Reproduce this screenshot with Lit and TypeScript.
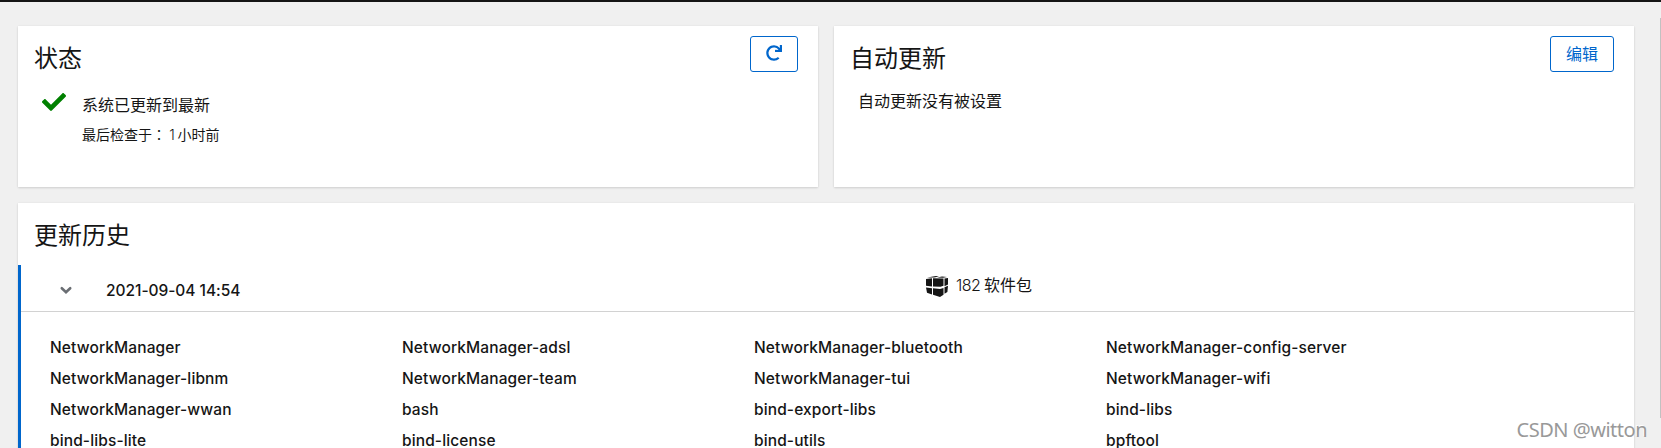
import { LitElement, html, css } from "lit";
import { customElement } from "lit/decorators.js";

const PACKAGES = [
  "NetworkManager", "NetworkManager-adsl", "NetworkManager-bluetooth", "NetworkManager-config-server",
  "NetworkManager-libnm", "NetworkManager-team", "NetworkManager-tui", "NetworkManager-wifi",
  "NetworkManager-wwan", "bash", "bind-export-libs", "bind-libs",
  "bind-libs-lite", "bind-license", "bind-utils", "bpftool",
];

@customElement("app-root")
export class AppRoot extends LitElement {
  static styles = css`
    :host {
      display: block;
      position: relative;
      box-sizing: border-box;
      height: 448px;
      overflow: hidden;
      background: #f0f0f0;
      border-top: 2px solid #151515;
      color: #151515;
      font: 350 16px/24px "Inter", "Noto Sans CJK SC", sans-serif;
    }
    * { box-sizing: border-box; }
    .page { padding: 24px 27px 0 18px; display: grid; grid-template-columns: 1fr 1fr; gap: 16px; }
    .card { background: #fff; box-shadow: 0 1px 2px rgba(3, 3, 3, 0.12), 0 0 2px rgba(3, 3, 3, 0.06); }
    .small { height: 161px; }
    .history { grid-column: 1 / 3; height: 300px; }
    .head { display: flex; justify-content: space-between; align-items: flex-start; padding: 10px 20px 0 16px; height: 56px; }
    h2 { margin: 5px 0 0; font-size: 24px; line-height: 36px; font-weight: 400; }
    button {
      height: 36px; padding: 0 15px; border: 1px solid #06c; border-radius: 3px; background: #fff;
      color: #06c; font: inherit; display: flex; align-items: center; justify-content: center;
    }
    .edit { font-weight: 400; padding-bottom: 1px; }
    .refresh { width: 48px; padding-bottom: 2px; }
    .status { display: flex; padding: 11px 0 0 24px; }
    .check { width: 24px; height: 24px; margin: -3px 16px 0 0; }
    .line { line-height: 24px; font-weight: 400; }
    .sub { font-size: 14px; line-height: 21px; margin-top: 7px; font-weight: 400; }
    .colon { font-family: "Noto Sans CJK TC", sans-serif; }
    .thin { font-weight: 300; letter-spacing: -0.6px; }
    .auto { padding: 7px 0 0 24px; font-weight: 400; }
    .details { border-left: 3px solid #06c; margin-top: 6px; height: 240px; }
    .row { display: flex; height: 47px; border-bottom: 1px solid #d2d2d2; }
    .chev { width: 16px; height: 16px; margin: 17px 32px 0 37px; }
    .date { width: 823px; padding-top: 14px; font-size: 15.5px; font-weight: 450; letter-spacing: -0.04px; }
    .count { display: flex; padding-top: 8px; font-weight: 400; }
    .pkg { width: 24px; height: 24px; margin: 2px 7px 0 -4px; }
    .list { display: grid; grid-template-columns: repeat(4, 352px); grid-auto-rows: 31px; padding: 20px 0 0 29px; font-size: 15.5px; font-weight: 450; line-height: 31px; letter-spacing: 0.12px; }
    .thumb { position: absolute; right: 0; top: 16px; width: 1px; height: 400px; background: #c1c1c1; }
    .mark { position: absolute; right: 14px; top: 414px; font: 20px/28px "Noto Sans", sans-serif; letter-spacing: -0.5px; color: #999; text-shadow: -1px -1px 0 #fff; white-space: nowrap; }
  `;

  render() {
    return html`
      <main class="page">
        <section class="card small">
          <div class="head">
            <h2>状态</h2>
            <button class="refresh" aria-label="refresh">
              <svg width="16" height="16" viewBox="0 0 512 512" fill="#06c">
                <path d="M500.33 0h-47.41a12 12 0 0 0-12 12.57l4 82.76A247.42 247.42 0 0 0 256 8C119.34 8 7.900 119.530 8 256.190 8.100 393.070 119.100 504 256 504a247.100 247.100 0 0 0 166.180-63.910 12 12 0 0 0 .48-17.430l-34-34a12 12 0 0 0-16.380-.55A176 176 0 1 1 402.100 157.800l-101.530-4.870a12 12 0 0 0-12.570 12v47.410a12 12 0 0 0 12 12h200.330a12 12 0 0 0 12-12V12a12 12 0 0 0-12-12z" />
              </svg>
            </button>
          </div>
          <div class="status">
            <svg class="check" viewBox="0 0 512 512" fill="#008000"><path d="M173.898 439.404l-166.4-166.4c-9.997-9.997-9.997-26.206 0-36.204l36.203-36.204c9.997-9.998 26.207-9.998 36.204 0L192 312.69 432.095 72.596c9.997-9.997 26.207-9.997 36.204 0l36.203 36.204c9.997 9.997 9.997 26.206 0 36.204l-294.4 294.401c-9.998 9.997-26.207 9.997-36.204-.001z" /></svg>
            <div>
              <div class="line">系统已更新到最新</div>
              <div class="sub">最后检查于<span class="colon">：</span><span class="thin"> 1 </span>小时前</div>
            </div>
          </div>
        </section>
        <section class="card small">
          <div class="head"><h2>自动更新</h2><button class="edit">编辑</button></div>
          <div class="auto">自动更新没有被设置</div>
        </section>
        <section class="card history">
          <div class="head"><h2>更新历史</h2></div>
          <div class="details">
            <div class="row">
              <svg class="chev" viewBox="0 0 16 16" fill="none" stroke="#6a6e73" stroke-width="2.6"><path d="M3.8 6.2L8 10.2l4.200-4" stroke-linecap="round" /></svg>
              <div class="date">2021-09-04 14:54</div>
              <div class="count">
                <svg class="pkg" viewBox="0 0 24 24" fill="#151515">
                  <path d="M1 4l6-.8v8.200l-6-.7zM8 3.300l10.500.2v7.200L15.500 11.800 8 11.500zM19.500 3.500l3.500-.6v6.600l-3.500 1.800zM2 2.600l9-1.600 3 .5-5 .9zM12 2.400l5-1 5 .7-4 .7zM1 12.500l6 .7v6.400L2 17.800zM8 13.300l7 .6 3.500-1v6.800L15 21.900 8 19.800zM19.500 12.300l3.500-1.600-.6 6.200-2.900 1.800z" />
                </svg>
                <span><span class="thin">182 </span>软件包</span>
              </div>
            </div>
            <div class="list">${PACKAGES.map((name) => html`<span>${name}</span>`)}</div>
          </div>
        </section>
      </main>
      <div class="thumb"></div>
      <div class="mark">CSDN @witton</div>
    `;
  }
}
